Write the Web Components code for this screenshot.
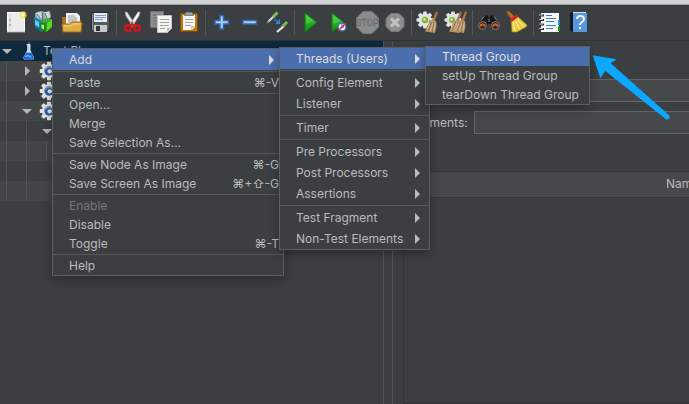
<!DOCTYPE html>
<html lang="en">
<head>
<meta charset="utf-8">
<title>Test Plan</title>
<style>
html, body { height: 100%; margin: 0; }
body { background: #3c3f41; color: #bbbbbb; font: 12px/16px Inter, "Liberation Sans", sans-serif; overflow: hidden; }
</style>
</head>
<body>
<app-window>
  <tool-bar slot="tools">
    <tool-group>
      <tool-button icon="new" label="New"></tool-button>
      <tool-button icon="templates" label="Templates"></tool-button>
      <tool-button icon="open" label="Open"></tool-button>
      <tool-button icon="save" label="Save"></tool-button>
    </tool-group>
    <tool-group>
      <tool-button icon="cut" label="Cut"></tool-button>
      <tool-button icon="copy" label="Copy"></tool-button>
      <tool-button icon="paste" label="Paste"></tool-button>
    </tool-group>
    <tool-group>
      <tool-button icon="plus" label="Expand all"></tool-button>
      <tool-button icon="minus" label="Collapse all"></tool-button>
      <tool-button icon="toggle" label="Toggle"></tool-button>
    </tool-group>
    <tool-group>
      <tool-button icon="start" label="Start"></tool-button>
      <tool-button icon="startnow" label="Start no pauses"></tool-button>
      <tool-button icon="stop" label="Stop"></tool-button>
      <tool-button icon="shutdown" label="Shutdown"></tool-button>
    </tool-group>
    <tool-group>
      <tool-button icon="clear" label="Clear"></tool-button>
      <tool-button icon="clearall" label="Clear all"></tool-button>
    </tool-group>
    <tool-group>
      <tool-button icon="search" label="Search"></tool-button>
      <tool-button icon="broom" label="Reset search"></tool-button>
    </tool-group>
    <tool-group>
      <tool-button icon="functions" label="Function helper"></tool-button>
      <tool-button icon="help" label="Help"></tool-button>
    </tool-group>
  </tool-bar>

  <plan-tree slot="tree">
    <tree-row level="0" twisty="open" icon="flask" selected>Test Plan</tree-row>
    <tree-row level="1" twisty="closed" icon="gear"></tree-row>
    <tree-row level="1" twisty="closed" icon="gear"></tree-row>
    <tree-row level="1" twisty="open" icon="gear"></tree-row>
    <tree-row level="2" twisty="open"></tree-row>
    <tree-row level="3"></tree-row>
    <tree-row level="2"></tree-row>
    <tree-row level="2"></tree-row>
  </plan-tree>

  <plan-editor slot="editor"></plan-editor>

  <pop-menu slot="overlay" style="--menu-width: 232px">
    <menu-item tall active>Add
      <pop-menu slot="submenu" style="--menu-width: 151px">
        <menu-item tall active>Threads (Users)
          <pop-menu slot="submenu" style="--menu-width: 165px">
            <menu-item active>Thread Group</menu-item>
            <menu-item>setUp Thread Group</menu-item>
            <menu-item>tearDown Thread Group</menu-item>
          </pop-menu>
        </menu-item>
        <menu-line></menu-line>
        <menu-item tall>Config Element</menu-item>
        <menu-item tall>Listener</menu-item>
        <menu-line></menu-line>
        <menu-item tall>Timer</menu-item>
        <menu-line></menu-line>
        <menu-item tall>Pre Processors</menu-item>
        <menu-item tall>Post Processors</menu-item>
        <menu-item tall>Assertions</menu-item>
        <menu-line></menu-line>
        <menu-item tall>Test Fragment</menu-item>
        <menu-item tall>Non-Test Elements</menu-item>
      </pop-menu>
    </menu-item>
    <menu-line></menu-line>
    <menu-item keys="⌘-V">Paste</menu-item>
    <menu-line></menu-line>
    <menu-item>Open...</menu-item>
    <menu-item>Merge</menu-item>
    <menu-item>Save Selection As...</menu-item>
    <menu-line></menu-line>
    <menu-item keys="⌘-G">Save Node As Image</menu-item>
    <menu-item keys="⌘+⇧-G">Save Screen As Image</menu-item>
    <menu-line></menu-line>
    <menu-item disabled>Enable</menu-item>
    <menu-item>Disable</menu-item>
    <menu-item keys="⌘-T">Toggle</menu-item>
    <menu-line></menu-line>
    <menu-item>Help</menu-item>
  </pop-menu>

  <pointer-arrow slot="overlay"></pointer-arrow>
</app-window>

<script>
const GEAR = (cx, cy, r) => {
  let teeth = '';
  for (let a = 0; a < 360; a += 45) {
    teeth += `<rect x="${cx - r * 0.22}" y="${cy - r}" width="${r * 0.44}" height="${r * 0.5}" rx="1" transform="rotate(${a} ${cx} ${cy})"/>`;
  }
  return `<g fill="#e2e2e2">${teeth}<circle cx="${cx}" cy="${cy}" r="${r * 0.76}"/></g>`;
};
const BROOM = `<path d="M22 3.500l2 .500-3.500 10-2.500-1z" fill="#a87848"/><path d="M15 12l7 1 .5 5-1.500 7-3-.5-7-1c2-3 3.500-7 4-11.500z" fill="#b8956b"/><path d="M17.500 14l-3.500 9M20 14l-2 10" stroke="#8d6a43" stroke-width=".8" fill="none"/><path d="M16 15l-3 7M18.800 15l-2.500 8M21.200 15l-1.500 8" stroke="#dcc09a" stroke-width=".8" fill="none"/>`;
const PLAY = `<path d="M8 5v19l12-9.500z" fill="url(#g)" stroke="#0c7d10"/><path d="M9 7l8 6-8 3z" fill="#5fd65a" opacity=".5"/>`;
const GREEN = `<defs><linearGradient id="g" x1="0" y1="0" x2="0" y2="1"><stop offset="0" stop-color="#45c83e"/><stop offset="1" stop-color="#079410"/></linearGradient></defs>`;

const ICONS = {
  new: `<defs><radialGradient id="y"><stop offset="0" stop-color="#fffde0"/><stop offset=".45" stop-color="#f4e04d"/><stop offset="1" stop-color="#f4e04d" stop-opacity="0"/></radialGradient></defs><rect x="5.500" y="4.500" width="17" height="19" fill="#ececec" stroke="#fff"/><path d="M8 6v16" stroke="#d2d2d2"/><path d="M7 12h2M7 17h2" stroke="#888"/><path d="M5 24h18" stroke="#aaa"/><circle cx="21" cy="7" r="4.500" fill="url(#y)"/><circle cx="21" cy="7" r="1.600" fill="#fffce0"/>`,
  templates: `<path d="M5 9V5l6-2 4 1 5-1 1 6-7 6-9-3z" fill="#8fa5ad"/><path d="M6 5l5-1.500 1 6-4 1zM14 4.500l5-1 1 6-4 2z" fill="#ccd9dc"/><path d="M7 6l3 4M15 5l2 5M12.500 5v8" stroke="#536b74"/><path d="M4 9l9 4v11l-8-3.500z" fill="#1482b8"/><path d="M5 12l4 2v5l-4-2z" fill="#68c6ea"/><path d="M5 18l5 2.500v2l-5-2z" fill="#0c5f8e"/><path d="M10 14l6.500 1.500V24L10 22z" fill="#168c14"/><path d="M16.500 15.500L22 11v8l-5.500 5z" fill="#52dc20"/><path d="M10 14l6-4 6 1-5.500 4.500z" fill="#3fa834"/><path d="M11.500 16.500l2.500.5v4l-2.500-.5z" fill="#b5ef9c"/>`,
  open: `<path d="M4 9h7l2 3h10v12H5z" fill="#a8771e"/><path d="M8 5h11l3 3v11H8z" fill="#f1f1f1"/><path d="M10 8h7M10 10h9M10 12h9M10 14h9" stroke="#9a9a9a"/><path d="M4 16h8l2-2h9l1 1-1 9H5z" fill="#dfae45" stroke="#9a6a14"/><path d="M6 18h7l2-2h7" stroke="#f6d684" fill="none"/>`,
  save: `<rect x="5.500" y="4.500" width="18" height="19" rx="1.500" fill="#565b60" stroke="#2b2e30"/><rect x="8" y="5" width="13" height="9" fill="#e5edf5"/><path d="M9 7.500h11M9 9.500h11M9 11.500h8" stroke="#7d9bc0"/><rect x="8" y="17" width="13" height="7" fill="#c6c8ca"/><rect x="10" y="18" width="4" height="5" fill="#343638"/><path d="M6.500 6v16" stroke="#8b9095"/>`,
  cut: `<path d="M6 4l2 0 9 14-2 2-8-12z" fill="#e6e6e6" stroke="#999" stroke-width=".6"/><path d="M21 4l-2 0-9 14 2 2 8-12z" fill="#f8f8f8" stroke="#aaa" stroke-width=".6"/><circle cx="13.500" cy="14" r="1" fill="#777"/><g fill="none" stroke="#d2151a" stroke-width="2.200"><ellipse cx="9" cy="20" rx="3" ry="2.800"/><ellipse cx="18" cy="20" rx="3" ry="2.800"/><path d="M11 18l2-2 3 2"/></g>`,
  copy: `<path d="M3.500 3.500h13v16h-13z" fill="#8e9192" stroke="#6f7273"/><path d="M6 7h8M6 10h8M6 13h8M6 16h5" stroke="#696c6d"/><path d="M10.500 7.500h14v13l-4 4h-10z" fill="#f3f3f2" stroke="#c4c4c4"/><path d="M13 11.500h9M13 14.500h9M13 17.500h9M13 20.500h5" stroke="#a6a6a6"/><path d="M24 20h-4v4z" fill="#b9b9b6"/>`,
  paste: `<rect x="5.500" y="5.500" width="17" height="18" rx="1" fill="#b97814" stroke="#7c4d08"/><path d="M8 7h12v12l-3 3H8z" fill="#f5f5f4"/><path d="M10 11.500h8M10 14.500h8M10 17.500h6" stroke="#a7a7a7"/><path d="M20 18h-4v4z" fill="#c6c6c3"/><path d="M9 8l1-3 2-1h4l2 1 1 3z" fill="#7f8482"/><path d="M11 6h6" stroke="#b8bdbb"/>`,
  plus: `<path d="M12 7.500h3.500v5h5V16h-5v5H12v-5H7v-3.500h5z" fill="#aecdf1" stroke="#2f6cb5" stroke-width="1.500"/>`,
  minus: `<path d="M7 12.500h13.500V16H7z" fill="#aecdf1" stroke="#2f6cb5" stroke-width="1.500"/>`,
  toggle: `<path d="M4 14l7-7" stroke="#ddd" stroke-width="2"/><path d="M9 9l4.500-4.500" stroke="#7dbd57" stroke-width="3"/><path d="M3 15l2-2" stroke="#888" stroke-width="1.500"/><path d="M13 24l7-6" stroke="#e6e6e6" stroke-width="2.200"/><path d="M18.500 18.500L23 14" stroke="#79bd52" stroke-width="3"/><path d="M10 11l4 3" stroke="#2b82e5" stroke-width="1.500"/><path d="M16 11v5h-5z" fill="#2b82e5"/>`,
  start: GREEN + PLAY,
  startnow: `${GREEN}<g transform="translate(-1 0)">${PLAY}</g><circle cx="17" cy="19" r="4" fill="#f2f4fa" stroke="#3b6db8" stroke-width="1.400"/><path d="M17 16v3h2" fill="none" stroke="#3b6db8"/><path d="M13 23l8-8" stroke="#d5322c" stroke-width="1.600"/>`,
  stop: `<path d="M10 3.500h9l6.500 6.500v9L19 25.500h-9L3.500 19v-9z" fill="#8c8c8c" stroke="#777"/><text x="14.500" y="18" font-family="Roboto, sans-serif" font-size="9" text-anchor="middle" fill="#999" stroke="#666" stroke-width=".5">STOP</text>`,
  shutdown: `<path d="M10 5.500h8l5 5v8l-5 5h-8l-5-5v-8z" fill="#8d8d8d" stroke="#777"/><path d="M10 10.500l8 8M18 10.500l-8 8" stroke="#c3c3c3" stroke-width="3"/>`,
  clear: GEAR(11, 12, 8.5) + `<circle cx="11" cy="12" r="3.200" fill="#7cba32"/><circle cx="10.500" cy="11.500" r="1.300" fill="#d6f09a"/>` + BROOM,
  clearall: GEAR(11, 12, 8.5) + `<circle cx="10" cy="12" r="3" fill="#7cba32"/><circle cx="9.500" cy="11.500" r="1.300" fill="#d6f09a"/><g transform="translate(-4 0)">${BROOM}</g><g transform="translate(1 0)">${BROOM}</g>`,
  search: `<path d="M8 9l4-2 2 3 2-3 4 2 5 8-3 4h-5l-1-5h-3l-2 5H6l-3-4z" fill="#171719"/><circle cx="7.500" cy="17.500" r="4" fill="#4a2415" stroke="#7d7d7d"/><circle cx="20.500" cy="17.500" r="4" fill="#4a2415" stroke="#7d7d7d"/><path d="M5 18.500c1-3 4-3 5 0M18 18.500c1-3 4-3 5 0" stroke="#c76532" stroke-width="2" fill="none"/><path d="M9 8.500l-3 4M19 8.500l3 4M14 11v3" stroke="#8a8a8a"/>`,
  broom: `<path d="M3 4l3-1 6 6-3 3z" fill="#b16d22" stroke="#7c4812" stroke-width=".6"/><path d="M8 12l6-4 10 9-1 2-9 5-5 0z" fill="#e9cc43" stroke="#a98515" stroke-width=".7"/><path d="M10 14l2 9M12.500 13l4 8M15 12l6 7" stroke="#fff09a" fill="none"/><path d="M7.500 13l7-5.500" stroke="#cc2626" stroke-width="3"/>`,
  functions: `<rect x="5" y="5" width="18" height="19" fill="#f7f7f7"/><path d="M10 7.500h6M10 10.500h10M10 13.500h8M10 17.500h10M10 20.500h7" stroke="#2f7cdb"/><path d="M3 7.500h5M3 12h5M3 16.500h5M3 21h5" stroke="#25282a" stroke-width="2"/><path d="M3 7h4M3 11.500h4M3 16h4M3 20.500h4" stroke="#c9c9c9"/><rect x="22" y="12" width="2" height="5" fill="#1685f5"/><rect x="22" y="18" width="2" height="5" fill="#1b9d16"/>`,
  help: `<path d="M6 5l3-1h13v2H9v18l-3-1z" fill="#17191b"/><rect x="9" y="5" width="14" height="19" fill="#5797df"/><path d="M9 4.500h13" stroke="#dedede"/><path d="M13 11c0-4 7-4 7 0 0 3-4 3-4 6" stroke="#f3f7fc" stroke-width="2" fill="none"/><rect x="15" y="19" width="2" height="2" fill="#f3f7fc"/>`,
  flask: `<path d="M10 5h6M14 2v4" stroke="#dfe6ec"/><path d="M11.500 5h4.500v8l5 10-1 3H7l-1-3 5.500-10z" fill="#dbe6ee"/><path d="M10 16h7.500l3 7-1 3H7.500l-1-3z" fill="#1f6bd6"/><path d="M9 22c2-2 6-2 8 1" stroke="#8cc4ff" stroke-width="1.500" fill="none"/><path d="M13.500 7v7" stroke="#9fb0bb"/>`,
  gear: GEAR(14, 14, 13) + `<circle cx="14" cy="14" r="6.500" fill="#2f5c9f"/><circle cx="15" cy="14.500" r="3" fill="#dfe9f6"/><path d="M9.500 12c1-4 7-5 9-1" stroke="#86a9d6" stroke-width="1.500" fill="none"/>`
};

const svg = (name, size = 28) =>
  `<svg width="${size}" height="${size}" viewBox="0 0 28 28" aria-hidden="true">${ICONS[name] || ''}</svg>`;

const define = (tag, render) => customElements.define(tag, class extends HTMLElement {
  connectedCallback() {
    if (!this.shadowRoot) this.attachShadow({ mode: 'open' }).innerHTML = render(this);
  }
});

define('app-window', () => `
<style>
:host { position: relative; display: flex; flex-direction: column; height: 100vh; overflow: hidden; }
.title { flex: none; height: 4px; background: #d2d2d2; border-bottom: 1px solid #a2a2a2; }
.split { flex: 1; display: flex; min-height: 0; }
.left { flex: 0 0 383px; border-right: 1px solid #555555; overflow: hidden; }
.grip { flex: 0 0 8px; border-right: 1px solid #555555; }
.right { flex: 1; min-width: 0; overflow: hidden; }
</style>
<div class="title"></div>
<slot name="tools"></slot>
<main class="split">
  <div class="left"><slot name="tree"></slot></div>
  <div class="grip"></div>
  <div class="right"><slot name="editor"></slot></div>
</main>
<slot name="overlay"></slot>`);

define('tool-bar', () => `
<style>
:host { flex: none; display: flex; padding: 3px 2px; border-bottom: 1px solid #323536; }
</style>
<slot></slot>`);

define('tool-group', () => `
<style>
:host { display: flex; }
:host(:not(:last-of-type))::after { content: ""; width: 1px; height: 25px; margin: 2px; background: #555758; }
</style>
<slot></slot>`);

define('tool-button', el => `
<style>
:host { display: block; }
button { display: block; padding: 0; border: 0; background: none; }
svg { display: block; }
</style>
<button type="button" aria-label="${el.getAttribute('label')}">${svg(el.getAttribute('icon'))}</button>`);

define('plan-tree', () => `
<style>
:host { display: block; }
::slotted(tree-row:nth-child(even)) { background: #424647; }
</style>
<div role="tree"><slot></slot></div>`);

define('tree-row', el => {
  const level = Number(el.getAttribute('level'));
  const twisty = el.getAttribute('twisty');
  const shape = twisty === 'open' ? 'M2 8h10l-5 5z' : twisty === 'closed' ? 'M5 5l5 5-5 5z' : '';
  return `
<style>
:host { display: flex; align-items: center; height: 20px; }
:host([selected]) { background: #0d293e; }
.guide { flex: none; width: 13px; height: 20px; margin-left: 6px; border-left: 1px solid #515556; }
.twisty { flex: none; width: 14px; height: 20px; fill: #b4b6b7; }
.icon { flex: none; width: 20px; height: 20px; margin: 0 4px 0 5px; }
.icon svg { display: block; }
</style>
${'<span class="guide"></span>'.repeat(level)}
<svg class="twisty" viewBox="0 0 14 20"><path d="${shape}"/></svg>
<span class="icon">${svg(el.getAttribute('icon'), 20)}</span>
<span><slot></slot></span>`;
});

define('plan-editor', () => `
<style>
:host { display: flex; flex-direction: column; height: 100%; padding: 38px 0 0 10px; box-sizing: border-box; }
form { display: grid; grid-template-columns: 64px 1fr; gap: 9px 7px; align-items: center; }
label { text-align: right; }
input { grid-column: 2; box-sizing: border-box; width: 100%; height: 23px; padding: 0 6px; border: 1px solid #646464; border-right: 0; background: #45494a; color: inherit; font: inherit; }
label { grid-column: 1; grid-row: 2; }
.vars { flex: 1; margin-top: 37px; border: 1px solid #323536; border-right: 0; overflow: hidden; }
table { width: 100%; border-collapse: collapse; }
th { height: 25px; padding: 0 0 0 262px; border-bottom: 1px solid #323536; background: #45494a; font-weight: 400; text-align: left; box-sizing: border-box; }
</style>
<form>
  <input aria-label="Name">
  <label for="comments">Comments:</label><input id="comments">
</form>
<div class="vars"><table><thead><tr><th scope="col">Name:</th></tr></thead></table></div>`);

define('pop-menu', () => `
<style>
:host { position: absolute; left: 52px; top: 48px; z-index: 1; display: block; box-sizing: border-box; width: var(--menu-width); border: 1px solid #5c5e5f; background: #3c3f41; box-shadow: 0 4px 10px rgba(0, 0, 0, .3); }
:host([slot="submenu"]) { left: calc(100% - 4px); top: -2px; }
</style>
<div role="menu"><slot></slot></div>`);

define('menu-line', () => `
<style>
:host { display: block; height: 1px; margin: 1px 0; background: #565859; }
</style>`);

define('menu-item', el => {
  const keys = el.getAttribute('keys');
  return `
<style>
:host { position: relative; display: block; }
button { display: flex; align-items: center; box-sizing: border-box; width: 100%; height: 19px; padding: 0 4px 0 16px; border: 0; background: none; color: #bbbbbb; font: inherit; text-align: left; white-space: nowrap; }
:host([tall]) button { height: 21px; padding-right: 9px; }
:host([active]) button { background: #4b6eaf; color: #dddddd; }
button:disabled { color: #777777; }
.label { flex: 1; }
.arrow { width: 5px; height: 10px; fill: #bbbbbb; }
:host([active]) .arrow { fill: #dddddd; }
</style>
<button type="button" role="menuitem"${el.hasAttribute('disabled') ? ' disabled' : ''}>
  <span class="label"><slot></slot></span>
  ${keys ? `<span>${keys}</span>` : ''}
  ${el.hasAttribute('tall') ? '<svg class="arrow" viewBox="0 0 5 10"><path d="M0 0l5 5-5 5z"/></svg>' : ''}
</button>
<slot name="submenu"></slot>`;
});

define('pointer-arrow', () => `
<style>
:host { position: absolute; left: 590px; top: 53px; z-index: 2; pointer-events: none; }
svg { display: block; }
</style>
<svg width="84" height="70" viewBox="0 0 84 70" aria-hidden="true">
  <path d="M2.700 2.300l24 4-6 4L79 62.300c2 2 0 5-3 4L15.300 18l-5 7.300z" fill="#0aa8ff"/>
</svg>`);
</script>
</body>
</html>
